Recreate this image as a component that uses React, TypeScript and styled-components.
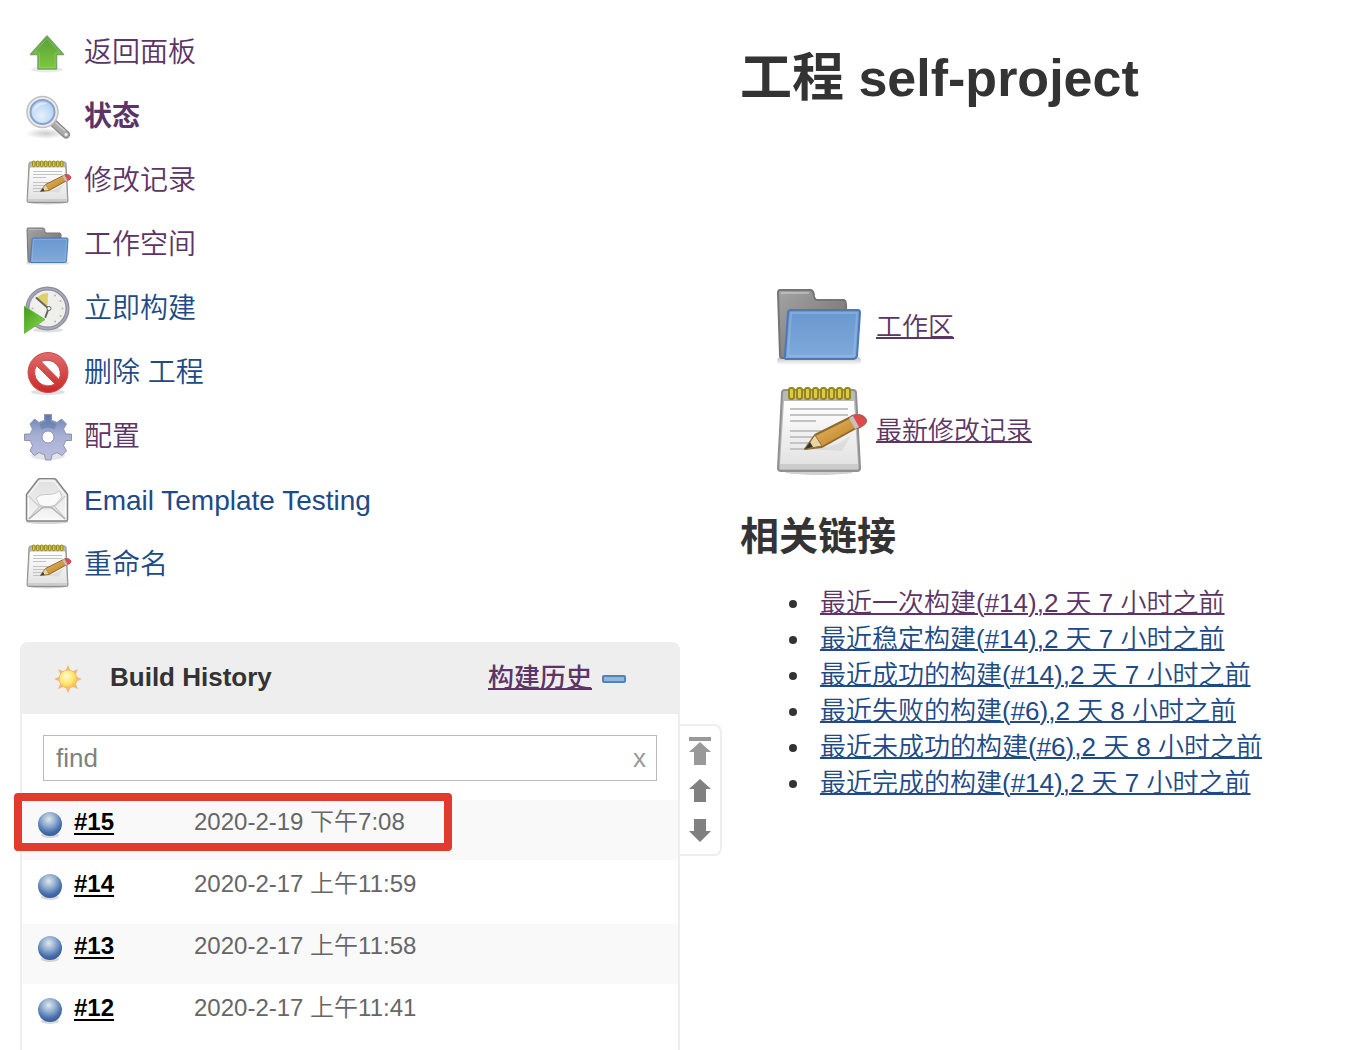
import React from "react";
import styled, { createGlobalStyle } from "styled-components";

const LINK = "#204a87";
const VISITED = "#5c3566";
const LINE = "#eeeeee";

const GlobalStyle = createGlobalStyle`
  *, *::before, *::after { box-sizing: border-box; }
  body {
    margin: 0;
    background: #ffffff;
    color: #333333;
    font-family: "Liberation Sans", "Noto Sans CJK SC", sans-serif;
    font-size: 26px;
    font-weight: 350;
    line-height: 36px;
  }
`;

const Page = styled.div`
  display: grid;
  grid-template-columns: 361fr 320fr;
  min-height: 100vh;
`;

const Sidebar = styled.aside`
  display: flex;
  flex-direction: column;
  min-width: 0;
  padding: 30px 0 0 20px;
`;

const TaskList = styled.ul`
  display: flex;
  flex-direction: column;
  gap: 16px;
  margin: 0 0 52px;
  padding: 0 0 0 4px;
  list-style: none;
`;

const TaskLink = styled.a<{ $visited?: boolean; $active?: boolean }>`
  display: flex;
  align-items: center;
  gap: 12px;
  color: ${(p) => (p.$visited ? VISITED : LINK)};
  font-size: 28px;
  font-weight: ${(p) => (p.$active ? 700 : 350)};
  text-decoration: none;
`;

const TaskLabel = styled.span`
  padding-bottom: 3px;
`;

const Icon = styled.svg<{ $size: number; $height?: number }>`
  display: block;
  flex: none;
  width: ${(p) => p.$size}px;
  height: ${(p) => p.$height ?? p.$size}px;
`;

const HistoryArea = styled.div`
  display: flex;
  flex: 1;
  align-items: flex-start;
`;

const Panel = styled.section`
  flex: 1;
  align-self: stretch;
  min-width: 0;
  border: 2px solid ${LINE};
  border-bottom: 0;
  border-radius: 8px 8px 0 0;
`;

const PanelHeader = styled.header`
  display: flex;
  align-items: center;
  height: 70px;
  padding: 0 52px 0 30px;
  background: ${LINE};
`;

const PanelTitle = styled.h2`
  flex: 1;
  margin: 0;
  padding: 0 0 4px 26px;
  font-size: 26px;
  line-height: 36px;
`;

const TextLink = styled.a<{ $visited?: boolean }>`
  color: ${(p) => (p.$visited ? VISITED : LINK)};
  text-decoration-thickness: 2px;
  text-underline-offset: 1px;
`;

const TrendLink = styled(TextLink)`
  padding-bottom: 2px;
  font-weight: 500;
`;

const CollapseButton = styled.button`
  margin: 0 0 0 10px;
  padding: 0;
  border: 0;
  background: none;
`;

const Search = styled.form`
  padding: 21px 21px 17px;
`;

const SearchBox = styled.div`
  display: flex;
  align-items: center;
  height: 46px;
  padding: 0 10px 0 12px;
  border: 1px solid #bbbbbb;
`;

const SearchInput = styled.input`
  flex: 1;
  min-width: 0;
  padding: 0;
  border: 0;
  outline: 0;
  background: none;
  color: #333333;
  font: inherit;

  &::placeholder {
    color: #808080;
    opacity: 1;
  }
`;

const ClearButton = styled.button`
  padding: 0;
  border: 0;
  background: none;
  color: #999999;
  font: inherit;
`;

const BuildTable = styled.table`
  width: 100%;
  border-spacing: 0;
  table-layout: fixed;
  font-size: 24px;
`;

const BuildRow = styled.tr`
  &:nth-child(odd) {
    background: #f9f9f9;
  }
`;

const Cell = styled.td<{ $width?: number }>`
  position: relative;
  width: ${(p) => (p.$width ? `${p.$width}px` : "auto")};
  height: 62px;
  padding: 4px 0 0;
  border-top: 2px solid #ffffff;
  color: #666666;
  vertical-align: top;
`;

const BallCell = styled(Cell)`
  padding: 12px 0 0 16px;
`;

const BuildLink = styled.a`
  color: #000000;
  font-weight: 700;
  text-decoration-thickness: 2px;
  text-underline-offset: 3px;
`;

const Highlight = styled.span`
  position: absolute;
  z-index: 1;
  top: -7px;
  left: -8px;
  width: 438px;
  height: 58px;
  border: 8px solid #e23a2e;
  border-radius: 4px;
  pointer-events: none;
`;

const Pager = styled.nav`
  display: flex;
  flex-direction: column;
  align-items: center;
  gap: 8px;
  width: 42px;
  margin-top: 82px;
  padding: 8px 0;
  border: 2px solid ${LINE};
  border-left: 0;
  border-radius: 0 8px 8px 0;
`;

const PagerButton = styled.button`
  padding: 0;
  border: 0;
  background: none;
`;

const Main = styled.main`
  min-width: 0;
  padding: 42px 18px 0;
`;

const Title = styled.h1`
  margin: 0;
  font-size: 52px;
  line-height: 72px;
`;

const Shortcuts = styled.ul`
  display: flex;
  flex-direction: column;
  gap: 8px;
  margin: 164px 0 0;
  padding: 0 0 0 32px;
  list-style: none;
`;

const Shortcut = styled.li`
  display: flex;
  align-items: center;
  gap: 8px;

  & > a {
    padding-top: 2px;
  }
`;

const SectionTitle = styled.h2`
  margin: 32px 0 21px;
  font-size: 39px;
  line-height: 54px;
`;

const Permalinks = styled.ul`
  margin: 0;
  padding: 0 0 0 72px;
`;

const Permalink = styled.li`
  padding-left: 8px;
`;

type IconProps = { size: number };

const ArrowIcon = ({ size }: IconProps) => (
  <Icon $size={size} viewBox="0 0 96 96" aria-hidden="true">
    <defs>
      <linearGradient id="arrow" x1="0" y1="0" x2="0" y2="1">
        <stop offset="0" stopColor="#5a9f3a" />
        <stop offset="1" stopColor="#7cc93d" />
      </linearGradient>
    </defs>
    <ellipse cx="46" cy="79" rx="32" ry="6" fill="#000" opacity=".08" />
    <path d="M46 12 79 49H65V78H28V49H13Z" fill="url(#arrow)" stroke="#74a562" strokeWidth="3" strokeLinejoin="round" />
    <path d="M46 17 72 46H62V75H31V46H20Z" fill="none" stroke="#a4dc7c" strokeWidth="2" opacity=".4" />
  </Icon>
);

const SearchIcon = ({ size }: IconProps) => (
  <Icon $size={size} viewBox="0 0 96 96" aria-hidden="true">
    <defs>
      <radialGradient id="lens" cx=".45" cy=".65" r=".6">
        <stop offset="0" stopColor="#e5f1fc" />
        <stop offset="1" stopColor="#b4d1ef" />
      </radialGradient>
      <radialGradient id="lensShadow">
        <stop offset="0" stopColor="#000" stopOpacity=".2" />
        <stop offset="1" stopColor="#000" stopOpacity="0" />
      </radialGradient>
    </defs>
    <ellipse cx="44" cy="79" rx="42" ry="11" fill="url(#lensShadow)" />
    <path d="M60 59 84 81" stroke="#8a8a8a" strokeWidth="16" strokeLinecap="round" />
    <path d="M61 60 84 81" stroke="#aaa" strokeWidth="11" strokeLinecap="round" />
    <path d="M63 57 82 74" stroke="#cfcfcf" strokeWidth="3" />
    <circle cx="84" cy="81" r="4" fill="#f3f3f3" stroke="#888" />
    <circle cx="37" cy="36" r="31" fill="#ececec" stroke="#bfbfbf" strokeWidth="3" />
    <circle cx="37" cy="36" r="24" fill="url(#lens)" stroke="#86a2cf" strokeWidth="4" />
    <path d="M18 39C17 22 33 12 47 20 34 20 22 28 18 39Z" fill="#fff" opacity=".45" />
  </Icon>
);

const NotesIcon = ({ size }: IconProps) => (
  <Icon $size={size} viewBox="0 0 96 96" aria-hidden="true">
    <defs>
      <linearGradient id="paper" x1="0" y1="0" x2="0" y2="1">
        <stop offset="0" stopColor="#ffffff" />
        <stop offset="1" stopColor="#e3e3e3" />
      </linearGradient>
      <linearGradient id="pencil" x1="0" y1="0" x2="1" y2="1">
        <stop offset="0" stopColor="#f2c878" />
        <stop offset="1" stopColor="#b57313" />
      </linearGradient>
    </defs>
    <ellipse cx="47" cy="90" rx="34" ry="3" fill="#000" opacity=".18" />
    <path d="M13 8H81Q84 8 84 11L88 86Q88 89 85 89H9Q6 89 6 86L10 11Q10 8 13 8Z" fill="#b9b9b6" stroke="#909090" strokeWidth="2" />
    <path d="M12 19H82L86 82H8Z" fill="url(#paper)" />
    <path d="M8 82H86V87H8Z" fill="#cccccc" />
    <g stroke="#c3c3c3" strokeWidth="2">
      <path d="M18 27H76M18 33H76M18 39H44M18 49H56M18 55H48M18 61H40M18 67H35" />
    </g>
    <path d="M34 67C50 66 64 66 80 52L70 69Z" fill="#000" opacity=".06" />
    <g fill="#dccb45" stroke="#94851f" strokeWidth="2">
      {[19, 27, 35, 43, 51, 59, 67, 75].map((x) => (
        <rect key={x} x={x - 2} y="6" width="5" height="11" rx="2" />
      ))}
    </g>
    <path d="M33 67 43 53 79 35 86 45 50 65Z" fill="url(#pencil)" stroke="#8f6a2f" strokeWidth="2" strokeLinejoin="round" />
    <path d="M33 67 43 53 50 64Z" fill="#ead5a2" stroke="#8c7240" strokeWidth="1" />
    <path d="M33 67 38 60 41 65Z" fill="#333" />
    <path d="M80 34Q90 31 94 38 95 42 86 46Z" fill="#e4494a" stroke="#b3595a" strokeWidth="2" strokeLinejoin="round" />
    <path d="M77 36 81 34 87 45 83 47Z" fill="#c8c0bf" />
  </Icon>
);

const FolderIcon = ({ size }: IconProps) => (
  <Icon $size={size} viewBox="0 0 96 96" aria-hidden="true">
    <defs>
      <linearGradient id="folderBack" x1="0" y1="0" x2="1" y2="1">
        <stop offset="0" stopColor="#a4a4a4" />
        <stop offset="1" stopColor="#6a6a6a" />
      </linearGradient>
      <linearGradient id="folderFront" x1="0" y1="0" x2="0" y2="1">
        <stop offset="0" stopColor="#6997cf" />
        <stop offset="1" stopColor="#80aadc" />
      </linearGradient>
      <linearGradient id="folderShadow" x1="0" y1="0" x2="0" y2="1">
        <stop offset="0" stopColor="#000" stopOpacity=".25" />
        <stop offset="1" stopColor="#000" stopOpacity="0" />
      </linearGradient>
    </defs>
    <rect x="5" y="79" width="84" height="8" rx="4" fill="url(#folderShadow)" />
    <path d="M8 12H39Q42 13 42 19L44 22H72Q74 23 74 26V80H10Q8 80 8 77L6 15Q6 12 8 12Z" fill="url(#folderBack)" stroke="#757575" strokeWidth="2" />
    <path d="M9 15H37" stroke="#d5d5d5" strokeWidth="2" opacity=".5" />
    <path d="M19 32H86Q88 32 88 35L85 78Q84 81 81 81H14Q12 81 13 78L16 35Q16 32 19 32Z" fill="url(#folderFront)" stroke="#4c79b6" strokeWidth="2" />
    <path d="M19 35H85L82 78H16Z" fill="none" stroke="#a5c5ea" strokeWidth="2" opacity=".4" />
  </Icon>
);

const ClockIcon = ({ size }: IconProps) => (
  <Icon $size={size} viewBox="0 0 96 96" aria-hidden="true">
    <defs>
      <linearGradient id="play" x1="0" y1="0" x2="1" y2="1">
        <stop offset="0" stopColor="#3f971c" />
        <stop offset="1" stopColor="#8be04a" />
      </linearGradient>
    </defs>
    <ellipse cx="48" cy="88" rx="30" ry="5" fill="#000" opacity=".12" />
    <circle cx="47" cy="45" r="40" fill="#efefeb" stroke="#8d8d9f" strokeWidth="8" />
    <circle cx="47" cy="45" r="40" fill="none" stroke="#a9a9bd" strokeWidth="3" />
    <path d="M47 45 25 24Q35 14 48 14Z" fill="#dfcf6d" />
    <path d="M25 24 49 45 43 62" fill="none" stroke="#666" strokeWidth="4" strokeLinecap="round" />
    <circle cx="50" cy="45" r="4" fill="#fff" stroke="#666" strokeWidth="2" />
    <g fill="#b5b5b5">
      <circle cx="77" cy="45" r="2" /><circle cx="73" cy="30" r="2" /><circle cx="62" cy="19" r="2" />
      <circle cx="73" cy="60" r="2" /><circle cx="62" cy="71" r="2" /><circle cx="17" cy="45" r="2" />
    </g>
    <path d="M0 40 42 67 0 95Z" fill="url(#play)" stroke="#6fb74c" strokeWidth="2" />
  </Icon>
);

const DeleteIcon = ({ size }: IconProps) => (
  <Icon $size={size} viewBox="0 0 96 96" aria-hidden="true">
    <defs>
      <linearGradient id="deny" x1="0" y1="0" x2="0" y2="1">
        <stop offset="0" stopColor="#df6b6b" />
        <stop offset="1" stopColor="#cb2929" />
      </linearGradient>
    </defs>
    <ellipse cx="48" cy="84" rx="34" ry="6" fill="#000" opacity=".12" />
    <path
      d="M48 5A40 40 0 1 0 48 85A40 40 0 1 0 48 5ZM34 23 70 59A27 27 0 0 0 34 23ZM25 31A27 27 0 0 0 62 68Z"
      fill="url(#deny)" stroke="#cd4c4c" strokeWidth="2" fillRule="evenodd"
    />
  </Icon>
);

const GearIcon = ({ size }: IconProps) => (
  <Icon $size={size} viewBox="0 0 96 96" aria-hidden="true">
    <defs>
      <linearGradient id="gear" x1="0" y1="0" x2="0" y2="1">
        <stop offset="0" stopColor="#6880b2" />
        <stop offset=".45" stopColor="#a6afd2" />
        <stop offset="1" stopColor="#bcc0e2" />
      </linearGradient>
    </defs>
    <ellipse cx="48" cy="83" rx="34" ry="9" fill="#000" opacity=".1" />
    <path
      fillRule="evenodd" fill="url(#gear)" stroke="#8e94b0" strokeWidth="2" strokeLinejoin="round"
      d="M41 1H55V13Q61 14 66 17L75 10 85 20 79 30Q82 35 83 40H95V53H83Q82 58 79 63L85 74 76 83 66 77Q61 80 56 81L54 92H43L41 81Q35 80 30 77L21 83 12 74 17 63Q14 58 13 53H1V40H13Q14 35 17 30L12 20 21 10 30 17Q35 14 41 13ZM48 34A12 12 0 1 0 48 58A12 12 0 1 0 48 34Z"
    />
    <path d="M43 3H53V15L65 20 61 31Q48 24 35 31L31 20 43 15Z" fill="#506ba3" opacity=".4" />
  </Icon>
);

const MailIcon = ({ size }: IconProps) => (
  <Icon $size={size} viewBox="0 0 96 96" aria-hidden="true">
    <defs>
      <linearGradient id="mail" x1="0" y1="0" x2="0" y2="1">
        <stop offset="0" stopColor="#dfdfdf" />
        <stop offset="1" stopColor="#f7f7f7" />
      </linearGradient>
    </defs>
    <ellipse cx="46" cy="88" rx="43" ry="4" fill="#000" opacity=".16" />
    <path d="M5 33 28 3Q30 1 34 1H57Q61 1 64 3L87 33V83Q87 86 84 86H8Q5 86 5 83Z" fill="url(#mail)" stroke="#858585" strokeWidth="3" strokeLinejoin="round" />
    <path d="M9 35 31 6H60L83 35V82H9Z" fill="none" stroke="#fff" strokeWidth="2" />
    <path d="M9 36 31 57 9 82M83 36 61 57 83 82M31 57Q46 62 61 57" fill="none" stroke="#cfcfcf" strokeWidth="3" />
    <path d="M24 40Q32 32 43 33 60 34 70 26 73 28 76 38L62 54Q46 61 31 54Z" fill="#fafafa" stroke="#c7c7c7" strokeWidth="2" />
    <path d="M10 82 36 60Q46 56 56 60L82 82" fill="none" stroke="#b3b3b3" strokeWidth="3" />
  </Icon>
);

const SUN_RAYS = [0, 45, 90, 135, 180, 225, 270, 315];

const SunIcon = ({ size }: IconProps) => (
  <Icon $size={size} viewBox="0 0 32 32" aria-hidden="true">
    <defs>
      <radialGradient id="sun" cx=".4" cy=".35" r=".7">
        <stop offset="0" stopColor="#fffbd0" />
        <stop offset=".6" stopColor="#fde66b" />
        <stop offset="1" stopColor="#f8b84a" />
      </radialGradient>
    </defs>
    {SUN_RAYS.map((angle) => (
      <path key={angle} d="M16 2 19 9H13Z" fill="#f3b676" transform={`rotate(${angle} 16 16)`} />
    ))}
    <circle cx="16" cy="16" r="9" fill="url(#sun)" stroke="#f6bd6c" />
  </Icon>
);

const BallIcon = ({ size }: IconProps) => (
  <Icon $size={size} $height={size + 2} viewBox="0 0 24 26" aria-hidden="true">
    <defs>
      <radialGradient id="ball" cx=".45" cy=".3" r=".7">
        <stop offset="0" stopColor="#e0e9ea" />
        <stop offset=".4" stopColor="#94afd1" />
        <stop offset=".8" stopColor="#456daa" />
        <stop offset="1" stopColor="#395b98" />
      </radialGradient>
    </defs>
    <ellipse cx="12" cy="23" rx="9" ry="3" fill="#000" opacity=".15" />
    <circle cx="12" cy="12" r="12" fill="url(#ball)" />
  </Icon>
);

const MinusIcon = () => (
  <Icon $size={24} $height={8} viewBox="0 0 24 8" aria-hidden="true">
    <rect x="1" y="1" width="22" height="6" rx="1" fill="#93b7dc" stroke="#5680b9" strokeWidth="2" />
  </Icon>
);

const PAGER_SHAPES = {
  top: { fill: "#999999", d: "M5 3H27V7H5ZM16 8 27 18H22V31H10V18H5Z" },
  up: { fill: "#808080", d: "M16 5 27 15H22V28H10V15H5Z" },
  down: { fill: "#808080", d: "M16 28 27 17H22V5H10V17H5Z" },
};

const PagerIcon = ({ kind }: { kind: keyof typeof PAGER_SHAPES }) => (
  <Icon $size={32} viewBox="0 0 32 32" aria-hidden="true">
    <path fill={PAGER_SHAPES[kind].fill} d={PAGER_SHAPES[kind].d} />
  </Icon>
);

const TASKS = [
  { label: "返回面板", icon: ArrowIcon, visited: true },
  { label: "状态", icon: SearchIcon, visited: true, active: true },
  { label: "修改记录", icon: NotesIcon, visited: true },
  { label: "工作空间", icon: FolderIcon, visited: true },
  { label: "立即构建", icon: ClockIcon },
  { label: "删除 工程", icon: DeleteIcon },
  { label: "配置", icon: GearIcon, visited: true },
  { label: "Email Template Testing", icon: MailIcon },
  { label: "重命名", icon: NotesIcon },
];

const BUILDS = [
  { id: "#15", date: "2020-2-19 下午7:08", highlighted: true },
  { id: "#14", date: "2020-2-17 上午11:59" },
  { id: "#13", date: "2020-2-17 上午11:58" },
  { id: "#12", date: "2020-2-17 上午11:41" },
];

const PERMALINKS = [
  { label: "最近一次构建(#14),2 天 7 小时之前", visited: true },
  { label: "最近稳定构建(#14),2 天 7 小时之前" },
  { label: "最近成功的构建(#14),2 天 7 小时之前" },
  { label: "最近失败的构建(#6),2 天 8 小时之前" },
  { label: "最近未成功的构建(#6),2 天 8 小时之前" },
  { label: "最近完成的构建(#14),2 天 7 小时之前" },
];

export default function App() {
  return (
    <Page lang="zh-CN">
      <GlobalStyle />
      <Sidebar>
        <TaskList>
          {TASKS.map(({ label, icon: TaskIcon, visited, active }) => (
            <li key={label}>
              <TaskLink href="#" $visited={visited} $active={active}>
                <TaskIcon size={48} />
                <TaskLabel>{label}</TaskLabel>
              </TaskLink>
            </li>
          ))}
        </TaskList>
        <HistoryArea>
          <Panel>
            <PanelHeader>
              <SunIcon size={32} />
              <PanelTitle>Build History</PanelTitle>
              <TrendLink href="#" $visited>构建历史</TrendLink>
              <CollapseButton type="button" aria-label="collapse">
                <MinusIcon />
              </CollapseButton>
            </PanelHeader>
            <Search>
              <SearchBox>
                <SearchInput type="text" placeholder="find" aria-label="find" />
                <ClearButton type="reset">x</ClearButton>
              </SearchBox>
            </Search>
            <BuildTable>
              <tbody>
                {BUILDS.map((build) => (
                  <BuildRow key={build.id}>
                    <BallCell $width={52}>
                      {build.highlighted && <Highlight />}
                      <BallIcon size={24} />
                    </BallCell>
                    <Cell $width={120}>
                      <BuildLink href="#">{build.id}</BuildLink>
                    </Cell>
                    <Cell>{build.date}</Cell>
                  </BuildRow>
                ))}
              </tbody>
            </BuildTable>
          </Panel>
          <Pager aria-label="Build pages">
            <PagerButton type="button" aria-label="newest"><PagerIcon kind="top" /></PagerButton>
            <PagerButton type="button" aria-label="newer"><PagerIcon kind="up" /></PagerButton>
            <PagerButton type="button" aria-label="older"><PagerIcon kind="down" /></PagerButton>
          </Pager>
        </HistoryArea>
      </Sidebar>
      <Main>
        <Title>工程 self-project</Title>
        <Shortcuts>
          <Shortcut>
            <FolderIcon size={96} />
            <TextLink href="#" $visited>工作区</TextLink>
          </Shortcut>
          <Shortcut>
            <NotesIcon size={96} />
            <TextLink href="#" $visited>最新修改记录</TextLink>
          </Shortcut>
        </Shortcuts>
        <SectionTitle>相关链接</SectionTitle>
        <Permalinks>
          {PERMALINKS.map(({ label, visited }) => (
            <Permalink key={label}>
              <TextLink href="#" $visited={visited}>{label}</TextLink>
            </Permalink>
          ))}
        </Permalinks>
      </Main>
    </Page>
  );
}
